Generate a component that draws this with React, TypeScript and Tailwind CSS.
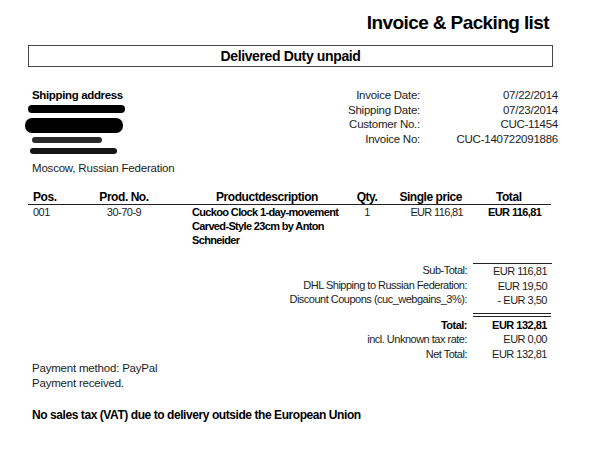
const addressInfo = [
  { label: "Invoice Date:", value: "07/22/2014" },
  { label: "Shipping Date:", value: "07/23/2014" },
  { label: "Customer No.:", value: "CUC-11454" },
  { label: "Invoice No:", value: "CUC-140722091886" },
];

const subTotals = [
  { label: "Sub-Total:", value: "EUR 116,81" },
  { label: "DHL Shipping to Russian Federation:", value: "EUR 19,50" },
  { label: "Discount Coupons (cuc_webgains_3%):", value: "- EUR 3,50" },
];

const grandTotals = [
  { label: "Total:", value: "EUR 132,81", bold: true },
  { label: "incl. Unknown tax rate:", value: "EUR 0,00", bold: false },
  { label: "Net Total:", value: "EUR 132,81", bold: false },
];

// narrow font isn't installed, so Liberation Sans gets squeezed with tracking
export default function App() {
  return (
    <div className="w-[600px] h-[450px] overflow-hidden bg-white text-[#1c1c1c] font-['Liberation_Sans_Narrow','Arial_Narrow','Liberation_Sans',sans-serif]">
      <div className="pt-[11px] pr-[51px] text-right text-[19px] leading-[24px] font-bold tracking-[-0.6px] text-black">
        Invoice &amp; Packing list
      </div>

      <div className="ml-[28px] mt-[10px] flex h-[22px] w-[525px] items-center justify-center border-[1.5px] border-[#4a4a4a] text-[14px] font-bold tracking-[-0.37px] text-black">
        Delivered Duty unpaid
      </div>

      {/* address + invoice info */}
      <div className="mt-[21px] flex text-[11.5px] leading-[14.5px] tracking-[-0.25px]">
        <div className="w-[300px] pl-[32px]">
          <div className="font-bold tracking-[-0.35px] text-black">Shipping address</div>
          <div className="flex flex-col">
            <div className="ml-[-4px] mt-[2.5px] h-[8px] w-[97px] rounded-full bg-black" />
            <div className="ml-[-7px] mt-[5px] h-[15px] w-[98px] rounded-[7px] bg-black" />
            <div className="mt-[4px] h-[6px] w-[70px] rounded-full bg-[#2a2a2a]" />
            <div className="ml-[-2px] mt-[5px] h-[6px] w-[87px] rounded-full bg-[#151515]" />
          </div>
          <div className="mt-[6.5px] tracking-[-0.2px]">Moscow, Russian Federation</div>
        </div>
        <div className="flex">
          <div className="w-[120px] text-right">
            {addressInfo.map((r) => (
              <div key={r.label}>{r.label}</div>
            ))}
          </div>
          <div className="w-[138px] text-right">
            {addressInfo.map((r) => (
              <div key={r.label}>{r.value}</div>
            ))}
          </div>
        </div>
      </div>

      {/* items table */}
      <div className="ml-[28px] mt-[15px] w-[523px]">
        <div className="flex border-b-[1.5px] border-[#222] text-[12px] leading-[14px] font-bold tracking-[-0.45px] text-black">
          <div className="w-[62px] pl-[5px]">Pos.</div>
          <div className="w-[68px] text-center">Prod. No.</div>
          <div className="w-[186px] pl-[32px] text-center">Productdescription</div>
          <div className="w-[46px] text-center">Qty.</div>
          <div className="w-[76px] pr-[4px] text-right">Single price</div>
          <div className="w-[85px] pl-[30px]">Total</div>
        </div>
        <div className="flex text-[11px] leading-[14px] tracking-[-0.5px]">
          <div className="w-[62px] pl-[5px]">001</div>
          <div className="w-[68px] text-center">30-70-9</div>
          <div className="w-[186px] pl-[34px] whitespace-nowrap font-bold tracking-[-0.65px] text-black">
            <div>Cuckoo Clock 1-day-movement</div>
            <div>Carved-Style 23cm by Anton</div>
            <div>Schneider</div>
          </div>
          <div className="w-[46px] text-center">1</div>
          <div className="w-[76px] pr-[3px] text-right tracking-[-0.65px]">EUR 116,81</div>
          <div className="w-[85px] pl-[22px] font-bold tracking-[-0.6px] text-black">EUR 116,81</div>
        </div>
      </div>

      {/* totals */}
      <div className="mt-[16px] flex text-[11px] leading-[14.5px] tracking-[-0.5px]">
        <div className="w-[467px] text-right">
          {subTotals.map((r) => (
            <div key={r.label}>{r.label}</div>
          ))}
        </div>
        <div className="ml-[6px] w-[79px] border-t-[1.5px] border-[#222] pr-[5px] text-right">
          {subTotals.map((r) => (
            <div key={r.label}>{r.value}</div>
          ))}
        </div>
      </div>
      <div className="mt-[5px] flex">
        <div className="ml-[473px] h-[4px] w-[78px] border-y border-[#222]" />
      </div>
      <div className="mt-[1px] flex text-[11px] leading-[14.5px] tracking-[-0.5px]">
        <div className="w-[467px] text-right">
          {grandTotals.map((r) => (
            <div key={r.label} className={r.bold ? "font-bold text-black" : ""}>
              {r.label}
            </div>
          ))}
        </div>
        <div className="ml-[6px] w-[79px] pr-[5px] text-right">
          {grandTotals.map((r) => (
            <div key={r.label} className={r.bold ? "font-bold text-black" : ""}>
              {r.value}
            </div>
          ))}
        </div>
      </div>

      {/* payment */}
      <div className="pl-[32px] text-[11.5px] leading-[14.5px] tracking-[-0.2px]">
        <div>Payment method: PayPal</div>
        <div>Payment received.</div>
      </div>
      <div className="mt-[18px] pl-[32px] text-[12px] leading-[14.5px] font-bold tracking-[-0.43px] text-black">
        No sales tax (VAT) due to delivery outside the European Union
      </div>
    </div>
  );
}
